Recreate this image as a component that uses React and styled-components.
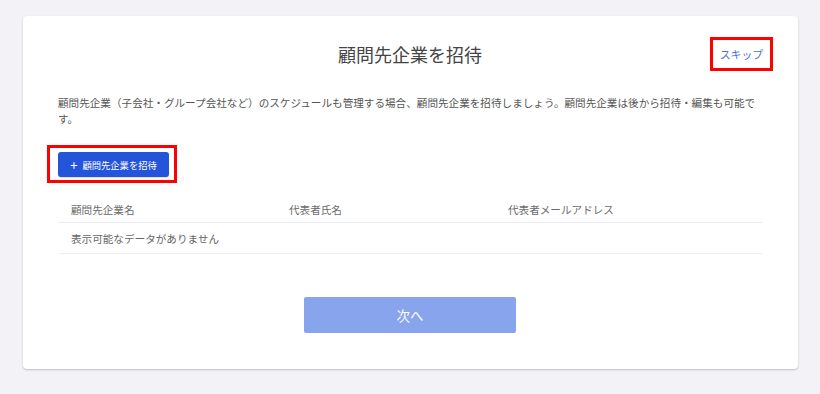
import React from "react";
import styled, { createGlobalStyle } from "styled-components";

const GlobalStyle = createGlobalStyle`
  html, body {
    margin: 0;
    padding: 0;
    background: #f2f2f7;
    font-family: "Noto Sans CJK JP", "Noto Sans", sans-serif;
    color: #444;
  }
  * { box-sizing: border-box; }
`;

const columns = ["顧問先企業名", "代表者氏名", "代表者メールアドレス"];

export default function App() {
  return (
    <Page>
      <GlobalStyle />
      <Card>
        <Header>
          <span />
          <Title>顧問先企業を招待</Title>
          <Highlight $side="right">
            <SkipLink href="#">スキップ</SkipLink>
          </Highlight>
        </Header>

        <Description>
          顧問先企業（子会社・グループ会社など）のスケジュールも管理する場合、顧問先企業を招待しましょう。顧問先企業は後から招待・編集も可能です。
        </Description>

        <InviteRow>
          <Highlight $side="left">
            <InviteButton type="button">
              <Plus>+</Plus>
              顧問先企業を招待
            </InviteButton>
          </Highlight>
        </InviteRow>

        <Table>
          <HeadRow>
            {columns.map((c) => (
              <Cell key={c}>{c}</Cell>
            ))}
          </HeadRow>
          <BodyRow>
            <EmptyCell>表示可能なデータがありません</EmptyCell>
          </BodyRow>
        </Table>

        <Footer>
          <NextButton type="button" disabled>
            次へ
          </NextButton>
        </Footer>
      </Card>
    </Page>
  );
}

const Page = styled.div`
  padding: 16px 22px 25px 23px;
`;

const Card = styled.div`
  background: #fff;
  border-radius: 4px;
  box-shadow: 0 1px 2px rgba(0, 0, 0, 0.22);
  padding: 21px 36px 36px 35px;
  display: flex;
  flex-direction: column;
`;

const Header = styled.div`
  display: grid;
  grid-template-columns: 1fr auto 1fr;
  align-items: center;
  height: 34px;
`;

const Title = styled.h1`
  margin: 0;
  font-size: 18px;
  font-weight: 400;
  color: #444;
  line-height: 1;
`;

const Highlight = styled.div`
  border: 3px solid #f00;
  display: flex;
  align-items: center;
  justify-self: ${(p) => (p.$side === "right" ? "end" : "start")};
  margin-right: ${(p) => (p.$side === "right" ? "-11px" : "0")};
  margin-left: ${(p) => (p.$side === "left" ? "-11px" : "0")};
  padding: ${(p) => (p.$side === "right" ? "0 7px" : "4px 5px 3px 8px")};
  height: ${(p) => (p.$side === "right" ? "34px" : "38px")};
`;

const SkipLink = styled.a`
  color: #4a70e0;
  font-size: 10.8px;
  text-decoration: none;
  line-height: 1;
`;

const Description = styled.p`
  margin: 24px 0 0;
  font-size: 10.6px;
  line-height: 16px;
  color: #555;
`;

const InviteRow = styled.div`
  display: flex;
  margin-top: 18px;
`;

const InviteButton = styled.button`
  display: flex;
  align-items: center;
  justify-content: center;
  gap: 5px;
  width: 111px;
  height: 25px;
  padding: 0;
  border: none;
  border-radius: 3px;
  background: #2354d9;
  color: #fff;
  font-family: inherit;
  font-size: 9.3px;
  cursor: pointer;
  box-shadow: 0 1px 1px rgba(0, 0, 0, 0.15);
`;

const Plus = styled.span`
  font-size: 13px;
  line-height: 1;
  margin-top: -1px;
`;

const Table = styled.div`
  margin-top: 14px;
  margin-left: 1px;
  display: flex;
  flex-direction: column;
`;

const HeadRow = styled.div`
  display: grid;
  grid-template-columns: 218px 219px 1fr;
  align-items: center;
  height: 26px;
  border-bottom: 1px solid #e8eaef;
`;

const BodyRow = styled.div`
  display: flex;
  align-items: center;
  height: 31px;
  border-bottom: 1px solid #eceef3;
`;

const Cell = styled.div`
  padding: 0 12px;
  font-size: 10.6px;
  color: #6b6b6b;
`;

const EmptyCell = styled(Cell)`
  color: #666;
`;

const Footer = styled.div`
  display: flex;
  justify-content: center;
  margin-top: 43px;
`;

const NextButton = styled.button`
  width: 212px;
  height: 36px;
  border: none;
  border-radius: 2px;
  background: #87a4ec;
  color: #fff;
  font-family: inherit;
  font-size: 13.5px;
  &:disabled { cursor: default; }
`;
